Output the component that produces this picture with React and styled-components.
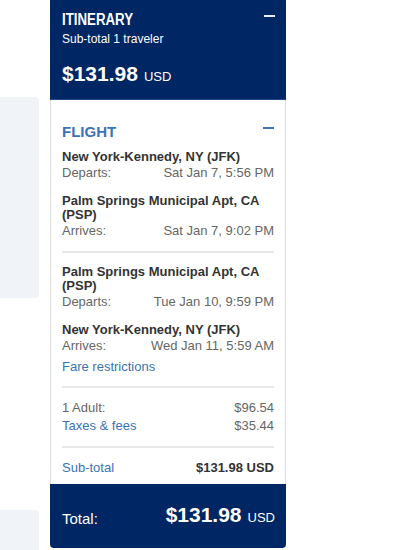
import React from "react";
import styled, { createGlobalStyle } from "styled-components";

const GlobalStyle = createGlobalStyle`
  body {
    margin: 0;
    background: #fff;
    font-family: "Liberation Sans", Arial, sans-serif;
    color: #333;
  }
`;

const Page = styled.div`
  display: flex;
  gap: 11px;
  align-items: flex-start;
  width: 417px;
  height: 550px;
  overflow: hidden;
`;

const Side = styled.div`
  width: 39px;
  flex-shrink: 0;
  display: flex;
  flex-direction: column;
`;

const Placeholder = styled.div`
  background: #f0f4f8;
  border-radius: 0 4px 4px 0;
  margin-top: ${(p) => p.$top}px;
  height: ${(p) => p.$height}px;
`;

const Panel = styled.aside`
  width: 236px;
  flex-shrink: 0;
  display: flex;
  flex-direction: column;
`;

const Header = styled.header`
  box-sizing: border-box;
  height: 100px;
  background: #002663;
  color: #fff;
  padding: 11px 11px 0 12px;
  border-bottom: 1px solid #1d4785;
`;

const TitleRow = styled.div`
  display: flex;
  justify-content: space-between;
  align-items: flex-start;
`;

/* the original uses a narrow bold face */
const Title = styled.h2`
  margin: 0;
  font-weight: 700;
  font-size: 16px;
  line-height: 17px;
  transform: scaleX(0.83);
  transform-origin: left center;
`;

const Collapse = styled.span`
  display: block;
  width: 11px;
  height: 2px;
  margin-top: ${(p) => p.$top}px;
  background: ${(p) => p.$color};
`;

const Travelers = styled.div`
  font-size: 12px;
  line-height: 14px;
  margin-top: 4px;
`;

const Amount = styled.div`
  margin-top: ${(p) => p.$top || 0}px;
  line-height: 25px;
  white-space: nowrap;
`;

const Big = styled.span`
  font-size: 21px;
  font-weight: 700;
`;

const Currency = styled.span`
  font-size: 13px;
  margin-left: 6px;
`;

const Body = styled.div`
  background: #fff;
  border-left: 1px solid #dedede;
  border-right: 1px solid #dedede;
  padding: 0 11px;
`;

const Section = styled.div`
  padding: ${(p) => p.$pad};
  border-bottom: ${(p) => (p.$line ? "2px solid #e8e8e8" : "none")};
`;

const SectionTitle = styled.h3`
  margin: 0;
  color: #3b73b5;
  font-size: 15px;
  font-weight: 700;
  line-height: 20px;
`;

const Stops = styled.div`
  display: flex;
  flex-direction: column;
  gap: 13px;
  margin-top: ${(p) => p.$top || 0}px;
`;

const Stop = styled.div``;

const Airport = styled.div`
  font-size: 13px;
  font-weight: 700;
  line-height: 14px;
  color: #333;
`;

const Row = styled.div`
  display: flex;
  justify-content: space-between;
  font-size: 13px;
  line-height: ${(p) => p.$lh || 18}px;
  margin-top: ${(p) => p.$top || 0}px;
  color: #666;
`;

const Link = styled.a`
  color: #3b73b5;
  text-decoration: none;
  font-size: 13px;
  line-height: 17px;
  display: block;
  margin-top: ${(p) => p.$top || 0}px;
`;

const Strong = styled.span`
  font-weight: 700;
  color: #333;
`;

const Footer = styled.footer`
  box-sizing: border-box;
  height: 64px;
  background: #002663;
  color: #fff;
  border-radius: 0 0 4px 4px;
  padding: 0 11px 0 12px;
  display: flex;
  justify-content: space-between;
  align-items: center;
`;

const TotalLabel = styled.span`
  font-size: 15px;
  line-height: 18px;
  margin-top: 5px;
`;

const legs = [
  [
    { name: ["New York-Kennedy, NY (JFK)"], label: "Departs:", when: "Sat Jan 7, 5:56 PM" },
    { name: ["Palm Springs Municipal Apt, CA", "(PSP)"], label: "Arrives:", when: "Sat Jan 7, 9:02 PM" },
  ],
  [
    { name: ["Palm Springs Municipal Apt, CA", "(PSP)"], label: "Departs:", when: "Tue Jan 10, 9:59 PM" },
    { name: ["New York-Kennedy, NY (JFK)"], label: "Arrives:", when: "Wed Jan 11, 5:59 AM" },
  ],
];

const StopList = ({ stops, top }) => (
  <Stops $top={top}>
    {stops.map((s, i) => (
      <Stop key={i}>
        {s.name.map((n) => (
          <Airport key={n}>{n}</Airport>
        ))}
        <Row $lh={17}>
          <span>{s.label}</span>
          <span>{s.when}</span>
        </Row>
      </Stop>
    ))}
  </Stops>
);

export default function App() {
  return (
    <>
      <GlobalStyle />
      <Page>
        <Side>
          <Placeholder $top={97} $height={201} />
          <Placeholder $top={212} $height={60} />
        </Side>
        <Panel>
          <Header>
            <TitleRow>
              <Title>ITINERARY</Title>
              <Collapse $top={4} $color="#e8edf5" />
            </TitleRow>
            <Travelers>Sub-total 1 traveler</Travelers>
            <Amount $top={15}>
              <Big>$131.98</Big>
              <Currency>USD</Currency>
            </Amount>
          </Header>
          <Body>
            <Section $pad="22px 0 12px" $line>
              <TitleRow>
                <SectionTitle>FLIGHT</SectionTitle>
                <Collapse $top={5} $color="#3b73b5" />
              </TitleRow>
              <StopList stops={legs[0]} top={8} />
            </Section>
            <Section $pad="12px 0 11px" $line>
              <StopList stops={legs[1]} />
              <Link href="#" $top={4}>
                Fare restrictions
              </Link>
            </Section>
            <Section $pad="11px 0 11px" $line>
              <Row>
                <span>1 Adult:</span>
                <span>$96.54</span>
              </Row>
              <Row>
                <Link as="span">Taxes &amp; fees</Link>
                <span>$35.44</span>
              </Row>
            </Section>
            <Section $pad="11px 0 7px">
              <Row>
                <Link as="span">Sub-total</Link>
                <Strong>$131.98 USD</Strong>
              </Row>
            </Section>
          </Body>
          <Footer>
            <TotalLabel>Total:</TotalLabel>
            <Amount>
              <Big>$131.98</Big>
              <Currency>USD</Currency>
            </Amount>
          </Footer>
        </Panel>
      </Page>
    </>
  );
}
